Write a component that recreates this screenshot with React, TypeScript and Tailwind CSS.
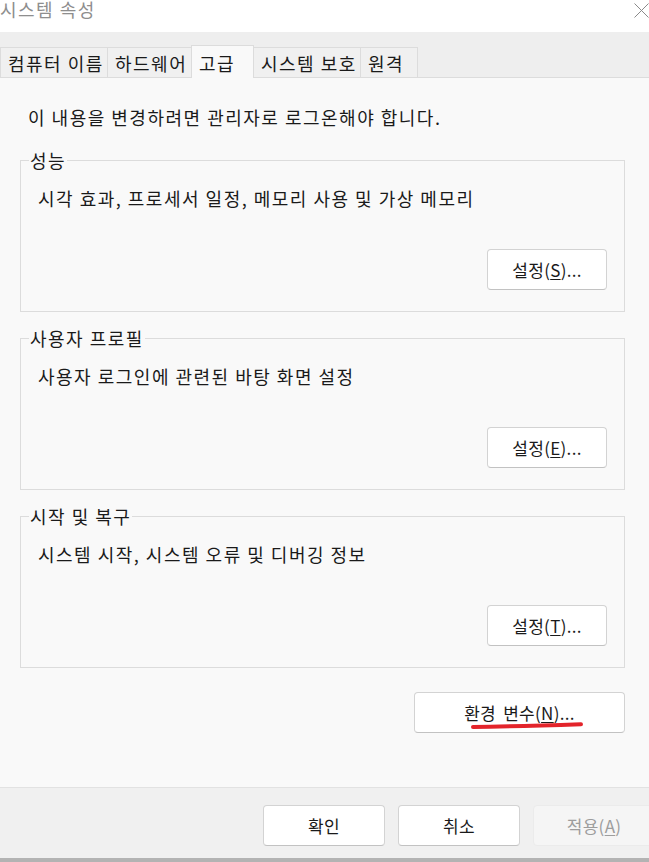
import React from 'react'

const tabs = [
  { label: '컴퓨터 이름', w: 'w-[108px]' },
  { label: '하드웨어', w: 'w-[85px]' },
  { label: '고급', w: 'w-[63px]', active: true },
  { label: '시스템 보호', w: 'w-[108px]' },
  { label: '원격', w: 'w-[58px]' },
]

const groups = [
  { title: '성능', desc: '시각 효과, 프로세서 일정, 메모리 사용 및 가상 메모리', key: 'S' },
  { title: '사용자 프로필', desc: '사용자 로그인에 관련된 바탕 화면 설정', key: 'E' },
  { title: '시작 및 복구', desc: '시스템 시작, 시스템 오류 및 디버깅 정보', key: 'T' },
]

function Button({ children, className = '', disabled = false }: { children: React.ReactNode; className?: string; disabled?: boolean }) {
  return (
    <button
      disabled={disabled}
      className={
        'h-[41px] rounded-[4px] border text-[17px] leading-[20px] tracking-[0.3px] [word-spacing:3px] flex items-center justify-center ' +
        (disabled
          ? 'bg-[#f5f5f5] border-[#ebebeb] text-[#9d9d9d]'
          : 'bg-white border-[#d3d3d3] border-b-[#c2c2c2] text-[#1a1a1a]') +
        ' ' +
        className
      }
    >
      {children}
    </button>
  )
}

export default function App() {
  return (
    <div className="w-[649px] h-[862px] overflow-hidden flex flex-col bg-[#f9f9f9] font-['Noto_Sans_CJK_KR','Noto_Sans',sans-serif] text-[#1a1a1a] text-[18px] leading-[20px] tracking-[1.5px]">
      {/* title bar */}
      <div className="h-[32px] bg-white flex justify-between items-start shrink-0">
        <div className="leading-[20px] -mt-[1px] text-[#8e8e8e]">시스템 속성</div>
        <svg width="15" height="15" viewBox="0 0 15 15" className="mt-[3px]">
          <path d="M0.5 0.5 L14.5 14.5 M14.5 0.5 L0.5 14.5" stroke="#8a8a8a" strokeWidth="1" fill="none" />
        </svg>
      </div>

      {/* tabs */}
      <div className="h-[46px] bg-[#eeeeee] border-b border-[#dcdcdc] flex items-end shrink-0">
        {tabs.map((t, i) => (
          <div
            key={t.label}
            className={
              t.w +
              ' border-t border-l border-r border-[#dcdcdc] pl-[7px] flex items-center whitespace-nowrap ' +
              (i > 0 ? '-ml-px ' : '') +
              (t.active ? 'h-[33px] -mb-px bg-[#f9f9f9] relative z-10 pt-[1px]' : 'h-[30px] bg-[#f0f0f0]')
            }
          >
            {t.label}
          </div>
        ))}
      </div>

      {/* content */}
      <div className="flex-1 pl-[20px] pr-[24px] pt-[29px] flex flex-col">
        <div className="pl-[8px]">이 내용을 변경하려면 관리자로 로그온해야 합니다.</div>

        <div className="mt-[23px] flex flex-col gap-[16px]">
          {groups.map(g => (
            <fieldset key={g.title} className="border border-[#dcdcdc] pb-[21px]">
              <legend className="ml-[8px] px-[1px]">{g.title}</legend>
              <div className="pl-[17px] pr-[17px] pt-[18px]">
                <div>{g.desc}</div>
                <div className="mt-[41px] flex justify-end">
                  <Button className="w-[120px]">
                    설정(<span className="underline underline-offset-2">{g.key}</span>)...
                  </Button>
                </div>
              </div>
            </fieldset>
          ))}
        </div>

        <div className="mt-[24px] flex justify-end">
          <div className="relative">
            <Button className="w-[211px]">
              환경 변수(<span className="underline underline-offset-2">N</span>)...
            </Button>
            <svg width="114" height="9" viewBox="0 0 114 9" className="absolute left-[56px] top-[29px]">
              <path d="M3 6 C 35 5.6, 75 4.4, 111 3.2" stroke="#e3242b" strokeWidth="4" strokeLinecap="round" fill="none" />
            </svg>
          </div>
        </div>
      </div>

      {/* footer */}
      <div className="h-[71px] bg-[#f0f0f0] border-t border-[#e2e2e2] shrink-0 pt-[17px] flex justify-end gap-[13px] -mr-[6px]">
        <Button className="w-[122px]">확인</Button>
        <Button className="w-[122px]">취소</Button>
        <Button className="w-[122px]" disabled>
          적용(<span className="underline underline-offset-2">A</span>)
        </Button>
      </div>
      <div className="h-[4px] bg-[#b3b3b3] shrink-0" />
    </div>
  )
}
